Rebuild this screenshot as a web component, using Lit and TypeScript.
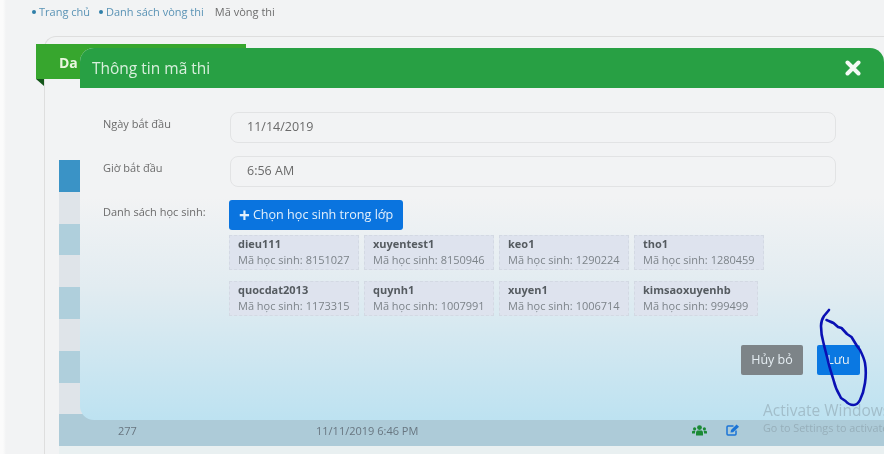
import { LitElement, html, css, svg } from "lit";
import { customElement } from "lit/decorators.js";

const students = [
  ["dieu111", "8151027"],
  ["xuyentest1", "8150946"],
  ["keo1", "1290224"],
  ["tho1", "1280459"],
  ["quocdat2013", "1173315"],
  ["quynh1", "1007991"],
  ["xuyen1", "1006714"],
  ["kimsaoxuyenhb", "999499"],
];

const rowKinds = ["head", "light", "mid", "light", "mid", "light", "mid", "light", "last", "end"];

@customElement("app-root")
export class AppRoot extends LitElement {
  static styles = css`
    :host {
      display: block;
      position: relative;
      width: 886px;
      height: 456px;
      overflow: hidden;
      background: #ffffff;
      font-family: "Open Sans", "Noto Sans", sans-serif;
      color: #666;
    }
    .stage {
      position: relative;
      width: 884px;
      height: 454px;
      overflow: hidden;
      filter: blur(0.45px);
      background: linear-gradient(90deg, #fbfbfb 3px, #f2f3f4 6px);
    }
    .crumbs {
      display: flex;
      align-items: center;
      height: 24px;
      padding-left: 32px;
      font-size: 11px;
      line-height: 24px;
      color: #5a93b5;
    }
    .crumbs i {
      width: 4px;
      height: 4px;
      border-radius: 50%;
      background: #2f7fa8;
      margin-right: 3px;
    }
    .crumbs span { margin-right: 9px; }
    .crumbs .current { color: #6d6d6d; margin-left: 2px; }
    .card {
      margin: 12px 0 0 44px;
      height: 440px;
      border: 1px solid #dedede;
      border-right: none;
      border-bottom: none;
      border-radius: 12px 0 0 0;
    }
    .tab {
      position: relative;
      box-sizing: border-box;
      width: 210px;
      height: 35px;
      margin: 7px 0 0 -9px;
      padding: 9px 0 0 23px;
      background: #37a62e;
      color: #eaf6df;
      font-size: 14px;
      font-weight: 700;
      line-height: 19px;
    }
    .tab::after {
      content: "";
      position: absolute;
      left: 0;
      top: 35px;
      border-top: 7px solid #14561a;
      border-left: 8px solid transparent;
    }
    .rows { margin: 81px 0 0 14px; }
    .row {
      display: flex;
      align-items: center;
      box-sizing: border-box;
      height: 31.8px;
      font-size: 11px;
      color: #687680;
    }
    .head { background: #3a93c6; }
    .light { background: #dfe4e9; }
    .mid { background: #afcfdc; }
    .last { background: #adcbd8; }
    .end { background: #e9f0f1; }
    .id { width: 257px; padding-left: 59px; box-sizing: border-box; }
    .date { width: 376px; }
    .ico { display: flex; gap: 19px; align-items: center; }
    .modal {
      position: absolute;
      left: 80px;
      top: 48px;
      width: 804px;
      height: 372px;
      display: flex;
      flex-direction: column;
      border-radius: 14px 14px 0 14px;
      overflow: hidden;
      background: linear-gradient(#f2f3f4 0%, #f2f3f4 40%, #e2ecf1 64%, #bde2f1 100%);
    }
    .m-head {
      flex: none;
      display: flex;
      align-items: center;
      justify-content: space-between;
      height: 40px;
      padding: 0 23px 0 12px;
      background: #28a044;
      color: #d9efdd;
      font-size: 15.5px;
    }
    .m-body { flex: 1; display: flex; flex-direction: column; padding: 24px 48px 45px 23px; }
    .field { display: flex; align-items: flex-start; margin-bottom: 13px; }
    .field label {
      flex: none;
      width: 127px;
      font-size: 11px;
      line-height: 24px;
      color: #6b6b6b;
    }
    .input {
      flex: 1;
      box-sizing: border-box;
      height: 31px;
      padding-left: 16px;
      border: 1.5px solid #e2e3e4;
      border-radius: 8px;
      font-size: 12.5px;
      line-height: 28px;
      color: #6a6a6a;
    }
    .pick {
      flex: none;
      height: 30px;
      margin-left: -1px;
      padding: 0 10px;
      border-radius: 3px;
      background: #0a74df;
      color: #e4f0fb;
      font-size: 12.6px;
      line-height: 30px;
      display: flex;
      align-items: center;
      gap: 3px;
    }
    .pick b { font-size: 19px; font-weight: 700; line-height: 30px; }
    .chips {
      display: flex;
      flex-wrap: wrap;
      gap: 11px 5px;
      width: 540px;
      margin: -8px 0 0 126px;
    }
    .chip {
      box-sizing: border-box;
      height: 35px;
      padding: 0 8px;
      border: 1px dashed #d3d9e3;
      background: #dee3ee;
      font-size: 11px;
      line-height: 16px;
      color: #7c8389;
      width: 124px;
    }
    .chip.wide { width: 130px; }
    .chip b { display: block; font-size: 11px; color: #555b60; }
    .foot { margin-top: auto; display: flex; justify-content: flex-end; gap: 14px; margin-right: -24px; }
    .btn {
      height: 30px;
      border-radius: 2px;
      font-size: 12.5px;
      line-height: 30px;
      color: #e6eef3;
      text-align: center;
    }
    .cancel { width: 62px; background: #7d8488; }
    .save { width: 43px; background: #0a78e2; }
    .watermark {
      position: absolute;
      left: 763px;
      top: 400px;
      width: 121px;
      overflow: hidden;
      white-space: nowrap;
      color: rgba(112, 124, 134, 0.36);
      font-size: 15.5px;
      line-height: 21px;
    }
    .watermark small { display: block; font-size: 10.8px; line-height: 14px; margin-top: 0; }
    .scribble { position: absolute; left: 0; top: 0; pointer-events: none; }
  `;

  private users() {
    return html`<svg width="15" height="11" viewBox="0 0 15 11" fill="#1b8a35">
      <circle cx="7.5" cy="2.6" r="2.4"></circle>
      <circle cx="2.6" cy="3.8" r="1.6"></circle>
      <circle cx="12.4" cy="3.8" r="1.6"></circle>
      <path d="M4 10.5V7.5C4 6 5 5.4 6 5.4H9C10 5.4 11 6 11 7.5V10.5Z"></path>
      <path d="M0 8.6V7C0 6 .8 5.8 1.6 5.8H3.6C3.2 6.3 3 6.8 3 7.6V8.6Z"></path>
      <path d="M15 8.6V7C15 6 14.2 5.8 13.4 5.8H11.4C11.8 6.3 12 6.8 12 7.6V8.6Z"></path>
    </svg>`;
  }

  private edit() {
    return html`<svg width="14" height="12" viewBox="0 0 14 12" fill="none">
      <path d="M10 6.5V10C10 10.6 9.6 11 9 11H2C1.4 11 1 10.6 1 10V3C1 2.4 1.4 2 2 2H7.5" stroke="#1b74d6" stroke-width="1.5"></path>
      <path d="M4.5 8.6L5 6L10.6 .6L13 2.8L7.2 8.2Z" fill="#1b74d6"></path>
    </svg>`;
  }

  private scribble() {
    return svg`<path d="M829 310L824 316C822 319 821 322 821 326C821 332 822 338 823.5 343C825 350 827 356 828.5 363C830 369 832 375 833.5 380C835 386 837 391 839.5 395L841 398L845.5 401C848 404 851 405 853.5 405C856.5 405 858.5 403 860 400C862 396 864 390 865 383C866 376 866 369 865 363C864 358 862 354 860 350L857 346L851.5 337L847 334L841.5 328L838 327L833.5 323C831 322 829 321 826.5 320"
      fill="none" stroke="#0a10b4" stroke-width="2.6" stroke-linecap="round" stroke-linejoin="round"></path>`;
  }

  render() {
    return html`<div class="stage">
      <nav class="crumbs">
        <i></i><span>Trang chủ</span>
        <i></i><span>Danh sách vòng thi</span>
        <span class="current">Mã vòng thi</span>
      </nav>
      <section class="card">
        <div class="tab">Da</div>
        <div class="rows">
          ${rowKinds.map((k) =>
            k === "last"
              ? html`<div class="row last">
                  <span class="id">277</span>
                  <span class="date">11/11/2019 6:46 PM</span>
                  <span class="ico">${this.users()}${this.edit()}</span>
                </div>`
              : html`<div class="row ${k}"></div>`
          )}
        </div>
      </section>

      <div class="modal">
        <header class="m-head">
          <span>Thông tin mã thi</span>
          <svg width="16" height="16" viewBox="0 0 16 16">
            <path d="M2.5 2.5L13.5 13.5M13.5 2.5L2.5 13.5" stroke="#f4faf5" stroke-width="4" stroke-linecap="round"></path>
          </svg>
        </header>
        <div class="m-body">
          <div class="field"><label>Ngày bắt đầu</label><div class="input">11/14/2019</div></div>
          <div class="field"><label>Giờ bắt đầu</label><div class="input">6:56 AM</div></div>
          <div class="field"><label>Danh sách học sinh:</label><div class="pick"><b>+</b>Chọn học sinh trong lớp</div></div>
          <div class="chips">
            ${students.map(
              ([n, c]) => html`<div class="chip ${c.length === 7 ? "wide" : ""}"><b>${n}</b>Mã học sinh: ${c}</div>`
            )}
          </div>
          <div class="foot">
            <div class="btn cancel">Hủy bỏ</div>
            <div class="btn save">Lưu</div>
          </div>
        </div>
      </div>

      <div class="watermark">Activate Windows<small>Go to Settings to activate</small></div>
      <svg class="scribble" width="886" height="456" viewBox="0 0 886 456">${this.scribble()}</svg>
    </div>`;
  }
}
